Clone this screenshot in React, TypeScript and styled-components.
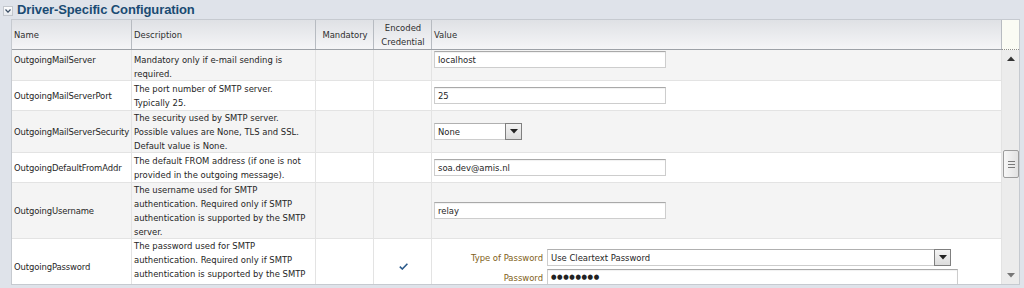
import React from "react";
import styled, { createGlobalStyle } from "styled-components";

const Global = createGlobalStyle`
  html, body { margin: 0; padding: 0; background: #dfe3ea; }
  body {
    width: 1024px; height: 288px; overflow: hidden;
    font-family: "DejaVu Sans Condensed", "DejaVu Sans", "Liberation Sans", sans-serif;
  }
`;

const Page = styled.div`
  width: 1024px;
  height: 288px;
  background: #dfe3ea;
  display: flex;
  flex-direction: column;
`;

const TitleBar = styled.div`
  height: 19px;
  display: flex;
  align-items: center;
  gap: 4px;
  padding-left: 3px;
  box-sizing: border-box;
`;

const Toggle = styled.span`
  width: 10px;
  height: 10px;
  box-sizing: border-box;
  border: 1px solid #c3c7cd;
  background: linear-gradient(#fdfdfe, #e6e9ee);
  display: flex;
  align-items: center;
  justify-content: center;
  margin-top: 2px;
`;

const Title = styled.h1`
  margin: 0;
  font-family: "Liberation Sans", Arial, sans-serif;
  font-weight: bold;
  font-size: 13px;
  color: #1a4b73;
  letter-spacing: -0.1px;
`;

const Panel = styled.div`
  margin-left: 11px;
  width: 1009px;
  box-sizing: border-box;
  border: 1px solid #c6cad0;
  background: #fff;
  display: flex;
  flex-direction: column;
`;

const HeaderRow = styled.div`
  display: grid;
  grid-template-columns: 120px 184px 58px 58px 570px 17px;
  height: 30px;
  box-sizing: border-box;
  border-bottom: 1px solid #9da1a7;
  background: linear-gradient(#dfe1e5, #f5f5f7);
`;

const HeadCell = styled.div<{ $center?: boolean }>`
  box-sizing: border-box;
  border-right: 1px solid #b7bbc1;
  display: flex;
  align-items: center;
  justify-content: ${(p) => (p.$center ? "center" : "flex-start")};
  text-align: ${(p) => (p.$center ? "center" : "left")};
  padding: 1px 1px 0 2px;
  font-size: 9.4px;
  line-height: 14px;
  color: #2e2e2e;
`;

const ScrollHead = styled.div`
  background: #fafbf4;
  border-bottom: 1px dotted #8c8c8c;
  margin-bottom: -1px;
`;

const Body = styled.div`
  display: flex;
  height: 234px;
`;

const Viewport = styled.div`
  width: 990px;
  overflow: hidden;
`;

const Row = styled.div<{ $h: number; $alt?: boolean }>`
  display: grid;
  grid-template-columns: 120px 184px 58px 58px 570px;
  height: ${(p) => p.$h}px;
  box-sizing: border-box;
  border-bottom: 1px solid #e3e3e3;
  background: ${(p) => (p.$alt ? "#f4f4f4" : "#ffffff")};
`;

const Cell = styled.div<{ $center?: boolean; $pt?: number; $top?: boolean; $tight?: boolean }>`
  box-sizing: border-box;
  border-right: 1px solid #e3e3e3;
  display: flex;
  flex-direction: column;
  justify-content: ${(p) => (p.$top ? "flex-start" : "center")};
  align-items: ${(p) => (p.$center ? "center" : "flex-start")};
  padding: ${(p) => p.$pt ?? 0}px 1px 0 2px;
  font-size: 9.4px;
  line-height: 14px;
  letter-spacing: ${(p) => (p.$tight ? "-0.12px" : "0")};
  color: #262626;
  white-space: nowrap;
  overflow: hidden;
`;

const Line = styled.span`
  display: block;
`;

const TextInput = styled.div<{ $w: number }>`
  width: ${(p) => p.$w}px;
  height: 17px;
  box-sizing: border-box;
  border: 1px solid #cdcdcd;
  border-top-color: #a9a9a9;
  box-shadow: inset 0 1px 1px rgba(0, 0, 0, 0.06);
  background: #fff;
  padding-left: 3px;
  font-size: 9.4px;
  line-height: 15px;
  color: #262626;
  display: flex;
  align-items: center;
  flex-shrink: 0;
`;

const SelectBox = styled.div<{ $w: number }>`
  width: ${(p) => p.$w}px;
  height: 17px;
  display: flex;
  box-sizing: border-box;
  flex-shrink: 0;
`;

const SelectText = styled.div`
  flex: 1;
  box-sizing: border-box;
  border: 1px solid #cdcdcd;
  border-top-color: #b0b0b0;
  border-right: none;
  background: #fff;
  padding-left: 3px;
  font-size: 9.4px;
  line-height: 15px;
  color: #262626;
`;

const SelectButton = styled.div`
  width: 17px;
  box-sizing: border-box;
  border: 1px solid #7f7f7f;
  background: linear-gradient(#f4f4f4, #dcdcdc);
  display: flex;
  align-items: center;
  justify-content: center;
`;

const Form = styled.div`
  display: grid;
  grid-template-columns: 111px auto;
  column-gap: 4px;
  row-gap: 3px;
  align-items: center;
  margin-left: -2px;
  margin-top: 1px;
`;

const Label = styled.span`
  text-align: right;
  color: #7f6118;
  font-size: 9.4px;
  line-height: 17px;
`;

const Dots = styled.span`
  font-size: 7px;
  letter-spacing: 0.6px;
  color: #222;
`;

const ScrollTrack = styled.div`
  width: 17px;
  background: #ececec;
  display: flex;
  flex-direction: column;
`;

const ScrollBtn = styled.div`
  height: 17px;
  display: flex;
  align-items: center;
  justify-content: center;
`;

const ScrollArea = styled.div`
  flex: 1;
`;

const Thumb = styled.div`
  margin-left: 1px;
  width: 16px;
  height: 28px;
  box-sizing: border-box;
  border: 1px solid #9c9c9c;
  border-radius: 2px;
  background: linear-gradient(90deg, #f7f7f7, #e2e2e2);
  display: flex;
  flex-direction: column;
  align-items: center;
  justify-content: center;
  gap: 2px;
`;

const Grip = styled.span`
  width: 7px;
  height: 1px;
  background: #7a7a7a;
`;

const Triangle = ({ up, color = "#222" }: { up?: boolean; color?: string }) => (
  <svg width="8" height="5" viewBox="0 0 8 5">
    <path d={up ? "M0 5 L4 0.5 L8 5 Z" : "M0 0 L8 0 L4 4.5 Z"} fill={color} />
  </svg>
);

const Check = () => (
  <svg width="9" height="7" viewBox="0 0 9 7">
    <path d="M0.8 3.6 L3.3 6 L8.4 0.8" fill="none" stroke="#2b5a8b" strokeWidth="1.6" />
  </svg>
);

type RowData = {
  name: string;
  desc: string[];
  h: number;
  value: React.ReactNode;
  check?: boolean;
  descTop?: boolean;
};

const rows: RowData[] = [
  {
    name: "OutgoingMailServer",
    desc: ["Mandatory only if e-mail sending is", "required."],
    h: 31,
    value: <TextInput $w={232}>localhost</TextInput>,
  },
  {
    name: "OutgoingMailServerPort",
    desc: ["The port number of SMTP server.", "Typically 25."],
    h: 30,
    value: <TextInput $w={232}>25</TextInput>,
  },
  {
    name: "OutgoingMailServerSecurity",
    desc: [
      "The security used by SMTP server.",
      "Possible values are None, TLS and SSL.",
      "Default value is None.",
    ],
    h: 42,
    value: (
      <SelectBox $w={88}>
        <SelectText>None</SelectText>
        <SelectButton>
          <Triangle />
        </SelectButton>
      </SelectBox>
    ),
  },
  {
    name: "OutgoingDefaultFromAddr",
    desc: ["The default FROM address (if one is not", "provided in the outgoing message)."],
    h: 30,
    value: <TextInput $w={232}>soa.dev@amis.nl</TextInput>,
  },
  {
    name: "OutgoingUsername",
    desc: [
      "The username used for SMTP",
      "authentication. Required only if SMTP",
      "authentication is supported by the SMTP",
      "server.",
    ],
    h: 56,
    value: <TextInput $w={232}>relay</TextInput>,
  },
  {
    name: "OutgoingPassword",
    desc: [
      "The password used for SMTP",
      "authentication. Required only if SMTP",
      "authentication is supported by the SMTP",
    ],
    h: 56,
    check: true,
    descTop: true,
    value: (
      <Form>
        <Label>Type of Password</Label>
        <SelectBox $w={404}>
          <SelectText>Use Cleartext Password</SelectText>
          <SelectButton>
            <Triangle />
          </SelectButton>
        </SelectBox>
        <Label>Password</Label>
        <TextInput $w={411}>
          <Dots>●●●●●●●●</Dots>
        </TextInput>
      </Form>
    ),
  },
];

export default function App() {
  return (
    <Page>
      <Global />
      <TitleBar>
        <Toggle>
          <svg width="6" height="4" viewBox="0 0 6 4">
            <path d="M0.5 0.5 L3 3.2 L5.5 0.5" fill="none" stroke="#3b4f66" strokeWidth="1.2" />
          </svg>
        </Toggle>
        <Title>Driver-Specific Configuration</Title>
      </TitleBar>
      <Panel>
        <HeaderRow>
          <HeadCell>Name</HeadCell>
          <HeadCell>Description</HeadCell>
          <HeadCell $center>Mandatory</HeadCell>
          <HeadCell $center>
            Encoded
            <br />
            Credential
          </HeadCell>
          <HeadCell>Value</HeadCell>
          <ScrollHead />
        </HeaderRow>
        <Body>
          <Viewport>
            {rows.map((r, i) => {
              const top = i === 0;
              return (
                <Row key={r.name} $h={r.h} $alt={i % 2 === 0}>
                  <Cell $top={top} $pt={top ? 3 : 0} $tight>
                    {r.name}
                  </Cell>
                  <Cell $top={top || r.descTop} $pt={top ? 3 : 0}>
                    {r.desc.map((d) => (
                      <Line key={d}>{d}</Line>
                    ))}
                  </Cell>
                  <Cell />
                  <Cell $center>{r.check ? <Check /> : null}</Cell>
                  <Cell $top={top} $pt={top ? 1 : 0}>
                    {r.value}
                  </Cell>
                </Row>
              );
            })}
          </Viewport>
          <ScrollTrack>
            <ScrollBtn>
              <Triangle up color="#333" />
            </ScrollBtn>
            <ScrollArea>
              <Thumb style={{ marginTop: 83 }}>
                <Grip />
                <Grip />
                <Grip />
              </Thumb>
            </ScrollArea>
            <ScrollBtn>
              <Triangle color="#777" />
            </ScrollBtn>
          </ScrollTrack>
        </Body>
      </Panel>
    </Page>
  );
}
